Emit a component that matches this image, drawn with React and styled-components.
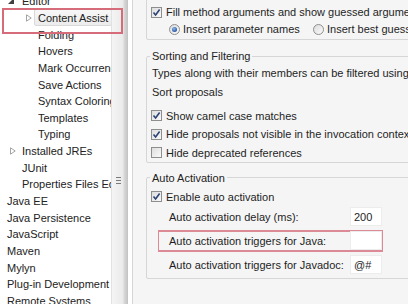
import React from "react";
import styled, { createGlobalStyle } from "styled-components";

const Global = createGlobalStyle`
  html, body { margin: 0; padding: 0; background: #fff; }
  body { font-family: "Liberation Sans", Arial, sans-serif; font-size: 11px; color: #1e1e1e; }
`;

const Root = styled.div`
  position: relative;
  width: 408px;
  height: 304px;
  overflow: hidden;
  display: flex;
  background: #fff;
`;

const LeftPane = styled.div`
  width: 132px;
  flex: none;
  display: flex;
  background: #fff;
  border-right: 1px solid #d6d6d6;
`;

const Tree = styled.ul`
  list-style: none;
  margin: -7px 0 0 0;
  padding: 0;
  width: 111px;
  flex: none;
  overflow: hidden;
  height: 330px;
`;

const TreeRow = styled.li`
  display: flex;
  align-items: center;
  height: 16.65px;
  margin-left: ${(p) => p.$indent}px;
  white-space: nowrap;
`;

const ArrowSlot = styled.span`
  width: 12px;
  flex: none;
  display: flex;
  align-items: center;
  padding-left: ${(p) => (p.$open ? 2 : 4)}px;
  box-sizing: border-box;
`;

const Label = styled.span`
  display: flex;
  align-items: center;
  height: 17px;
  box-sizing: border-box;
  padding: 0 3px;
  border: 1px solid ${(p) => (p.$selected ? "#d9d9d9" : "transparent")};
  border-radius: 2px;
  background: ${(p) => (p.$selected ? "linear-gradient(#f7f7f7, #ececec)" : "transparent")};
  color: #222;
`;

const ScrollBar = styled.div`
  width: 16px;
  flex: none;
  border-left: 1px solid #e2e2e2;
  overflow: hidden;
  margin-right: 4px;
`;

const Thumb = styled.div`
  margin-top: -60px;
  height: 480px;
  display: flex;
  align-items: center;
  justify-content: center;
  padding-right: 3px;
  background: linear-gradient(to right, #f4f4f4 0%, #ebebeb 65%, #d4d4d4 80%, #c2c2c2 100%);
`;

const Grip = styled.div`
  width: 5px;
  height: 5px;
  border-top: 1px solid #7a7a7a;
  border-bottom: 1px solid #7a7a7a;
  display: flex;
  align-items: center;
  &::before {
    content: "";
    display: block;
    width: 5px;
    height: 1px;
    background: #7a7a7a;
  }
`;

const Highlight = styled.div`
  position: absolute;
  left: 2px;
  top: 8px;
  width: 121px;
  height: 26px;
  box-sizing: border-box;
  border: 2px solid #d66c7a;
  pointer-events: none;
`;

const RightPane = styled.div`
  flex: 1;
  background: #f5f5f5;
  overflow: hidden;
  padding-left: 13px;
  display: flex;
  flex-direction: column;
`;

const Group = styled.fieldset`
  width: 300px;
  flex: none;
  margin: ${(p) => p.$mt}px 0 0 0;
  padding: ${(p) => p.$pt || 0}px 0 ${(p) => p.$pb || 0}px 3px;
  border: 1px solid #d6d6d6;
  border-radius: 2px;
  min-width: 0;
  box-sizing: border-box;
`;

const Legend = styled.legend`
  padding: 0 2px;
  line-height: 16px;
  height: 16px;
  color: #222;
`;

const Row = styled.div`
  display: flex;
  align-items: center;
  gap: ${(p) => p.$gap ?? 4}px;
  height: ${(p) => p.$h || 17}px;
  margin-top: ${(p) => p.$mt || 0}px;
  padding-left: ${(p) => p.$pl ?? 1}px;
  white-space: nowrap;
`;

const TextRow = styled.div`
  height: ${(p) => p.$h || 17}px;
  line-height: ${(p) => p.$h || 17}px;
  margin-top: ${(p) => p.$mt || 0}px;
  padding-left: 2px;
  white-space: nowrap;
`;

const Box = styled.span`
  width: 11px;
  height: 11px;
  flex: none;
  box-sizing: border-box;
  border: 1px solid #8e8e8e;
  background: linear-gradient(135deg, #dedede, #f9f9f9);
  display: flex;
  align-items: center;
  justify-content: center;
`;

const Radio = styled.span`
  width: 11px;
  height: 11px;
  flex: none;
  box-sizing: border-box;
  border-radius: 50%;
  border: 1px solid #8e8e8e;
  background: linear-gradient(135deg, #dcdcdc, #fafafa);
  display: flex;
  align-items: center;
  justify-content: center;
`;

const RadioDot = styled.span`
  width: 5px;
  height: 5px;
  border-radius: 50%;
  background: radial-gradient(circle at 40% 35%, #8cb8ee, #1f4b9a 80%);
`;

const RadioItem = styled.span`
  display: flex;
  flex: none;
  align-items: center;
  gap: 3px;
  width: ${(p) => p.$w || "auto"};
`;

const SubRow = styled.div`
  display: flex;
  align-items: center;
  justify-content: space-between;
  width: 225px;
  height: 22px;
  box-sizing: border-box;
  margin: ${(p) => p.$mt || 0}px 0 0 8px;
  padding-left: 10px;
  border: 2px solid ${(p) => (p.$marked ? "#dc8a95" : "transparent")};
  border-left-width: 1px;
  border-right-width: 1px;
  white-space: nowrap;
`;

const Field = styled.input`
  width: 32px;
  height: 19px;
  box-sizing: border-box;
  border: 1px solid #ececec;
  background: #fff;
  padding: 0 0 0 3px;
  margin: 0;
  font: 11px "Liberation Sans", Arial, sans-serif;
  color: #1e1e1e;
  outline: none;
`;

const Check = () => (
  <svg width="9" height="9" viewBox="0 0 9 9">
    <path d="M1.5 4.5 L3.6 7 L7.6 1.6" fill="none" stroke="#2c4275" strokeWidth="1.6" />
  </svg>
);

const CheckBox = ({ checked }) => <Box>{checked && <Check />}</Box>;

const Arrow = ({ open }) =>
  open ? (
    <svg width="6" height="6" viewBox="0 0 6 6">
      <path d="M6 0 L6 6 L0 6 Z" fill="#404040" />
    </svg>
  ) : (
    <svg width="6" height="8" viewBox="0 0 6 8">
      <path d="M0.5 0.8 L5.2 4 L0.5 7.2 Z" fill="#fff" stroke="#a4a4a4" strokeWidth="1" />
    </svg>
  );

const labelX = { 1: 3, 2: 18, 3: 34 };

const items = [
  { t: "Editor", l: 2, a: "open" },
  { t: "Content Assist", l: 3, a: "closed", s: true },
  { t: "Folding", l: 3 },
  { t: "Hovers", l: 3 },
  { t: "Mark Occurrences", l: 3 },
  { t: "Save Actions", l: 3 },
  { t: "Syntax Coloring", l: 3 },
  { t: "Templates", l: 3 },
  { t: "Typing", l: 3 },
  { t: "Installed JREs", l: 2, a: "closed" },
  { t: "JUnit", l: 2 },
  { t: "Properties Files Editor", l: 2 },
  { t: "Java EE", l: 1 },
  { t: "Java Persistence", l: 1 },
  { t: "JavaScript", l: 1 },
  { t: "Maven", l: 1 },
  { t: "Mylyn", l: 1 },
  { t: "Plug-in Development", l: 1 },
  { t: "Remote Systems", l: 1 },
];

export default function App() {
  return (
    <>
      <Global />
      <Root>
        <LeftPane>
          <Tree>
            {items.map((it) => (
              <TreeRow key={it.t} $indent={labelX[it.l] - 12}>
                <ArrowSlot $open={it.a === "open"}>{it.a && <Arrow open={it.a === "open"} />}</ArrowSlot>
                <Label $selected={it.s}>{it.t}</Label>
              </TreeRow>
            ))}
          </Tree>
          <ScrollBar>
            <Thumb>
              <Grip />
            </Thumb>
          </ScrollBar>
        </LeftPane>
        <RightPane>
          <Group $mt={-10} $pt={12.5} $pb={1.5}>
            <Row>
              <CheckBox checked />
              <span>Fill method arguments and show guessed arguments</span>
            </Row>
            <Row $pl={19} $gap={0}>
              <RadioItem $w="144px">
                <Radio>
                  <RadioDot />
                </Radio>
                <span>Insert parameter names</span>
              </RadioItem>
              <RadioItem>
                <Radio />
                <span>Insert best guessed arguments</span>
              </RadioItem>
            </Row>
          </Group>
          <Group $mt={8} $pb={0}>
            <Legend>Sorting and Filtering</Legend>
            <TextRow $mt={0.5}>Types along with their members can be filtered using type filters.</TextRow>
            <TextRow $mt={2}>Sort proposals</TextRow>
            <Row $mt={6} $h={18.5}>
              <CheckBox checked />
              <span>Show camel case matches</span>
            </Row>
            <Row $h={18.5}>
              <CheckBox checked />
              <span>Hide proposals not visible in the invocation context</span>
            </Row>
            <Row $h={18.5}>
              <CheckBox />
              <span>Hide deprecated references</span>
            </Row>
          </Group>
          <Group $mt={6.5} $pb={2}>
            <Legend>Auto Activation</Legend>
            <Row $mt={2} $h={18}>
              <CheckBox checked />
              <span>Enable auto activation</span>
            </Row>
            <SubRow>
              <span>Auto activation delay (ms):</span>
              <Field defaultValue="200" readOnly />
            </SubRow>
            <SubRow $mt={2} $marked>
              <span>Auto activation triggers for Java:</span>
              <Field defaultValue="" readOnly />
            </SubRow>
            <SubRow $mt={2}>
              <span>Auto activation triggers for Javadoc:</span>
              <Field defaultValue="@#" readOnly />
            </SubRow>
          </Group>
        </RightPane>
        <Highlight />
      </Root>
    </>
  );
}
